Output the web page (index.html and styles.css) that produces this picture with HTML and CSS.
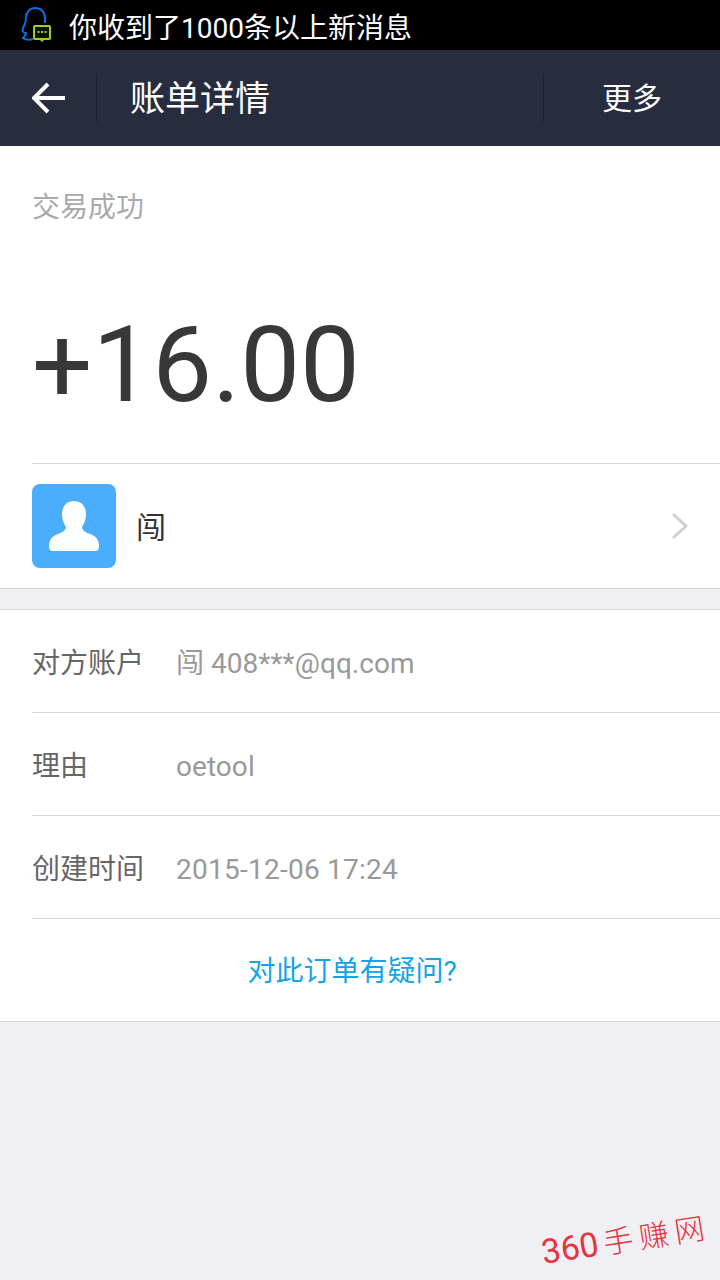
FILE: index.html
```html
<!DOCTYPE html>
<html>
<head>
  <title>账单详情</title>
  <link rel="stylesheet" href="styles.css">
</head>
<body>
  <div class="status-bar">
    <svg class="qq-icon" width="34" height="36" viewBox="0 0 34 36">
      <path d="M13 32 C10 33 5 33 3 31 C5 29 6 28 6 26 C3 26 2 24 3 21 C5 17 6 16 6 11 C6 5 10 1 15 1 C21 1 25 5 25 11 L25 16" fill="none" stroke="#0a6fe0" stroke-width="2"/>
      <rect x="14" y="19" width="16" height="13" rx="1" fill="#0b1200" stroke="#a4cf10" stroke-width="2"/>
      <path d="M19 32 L22 35 L25 32 Z" fill="#a4cf10"/>
      <rect x="17.500" y="24" width="2" height="2" fill="#a4cf10"/>
      <rect x="21" y="24" width="2" height="2" fill="#a4cf10"/>
      <rect x="24.500" y="24" width="2" height="2" fill="#a4cf10"/>
    </svg>
    <span class="status-text">你收到了1000条以上新消息</span>
  </div>

  <div class="title-bar">
    <div class="back-btn">
      <svg width="34" height="32" viewBox="0 0 34 32">
        <path d="M33 16 L3 16 M16 2 L2 16 L16 30" fill="none" stroke="#fff" stroke-width="4"/>
      </svg>
    </div>
    <div class="title">账单详情</div>
    <div class="more">更多</div>
  </div>

  <div class="summary">
    <div class="state">交易成功</div>
    <div class="amount">+16.00</div>
    <div class="payer">
      <div class="avatar">
        <svg width="52" height="50" viewBox="0 0 52 50">
          <path d="M26 0 C34 0 38 6 38 13 C38 19 36 23 34 26 C34 29 37 31 42 33 C48 35 51 39 51 45 C51 48 50 50 47 50 L5 50 C2 50 1 48 1 45 C1 39 4 35 10 33 C15 31 18 29 18 26 C16 23 14 19 14 13 C14 6 18 0 26 0 Z" fill="#fdfeff"/>
        </svg>
      </div>
      <div class="payer-name">闯</div>
      <svg class="chevron" width="18" height="28" viewBox="0 0 18 28">
        <path d="M2 2 L15 14 L2 26" fill="none" stroke="#d0d0d4" stroke-width="3"/>
      </svg>
    </div>
  </div>

  <div class="details">
    <div class="row">
      <div class="label">对方账户</div>
      <div class="value">闯 408***@qq.com</div>
    </div>
    <div class="row">
      <div class="label">理由</div>
      <div class="value">oetool</div>
    </div>
    <div class="row">
      <div class="label">创建时间</div>
      <div class="value time">2015-12-06 17:24</div>
    </div>
    <div class="question">对此订单有疑问?</div>
  </div>

  <div class="watermark"><span class="wm-num">360</span><span class="wm-cn">手赚网</span></div>
</body>
</html>
```

FILE: styles.css
```css
* {
  box-sizing: border-box;
}

html, body {
  margin: 0;
  padding: 0;
}

body {
  width: 720px;
  height: 1280px;
  overflow: hidden;
  position: relative;
  background-color: #efeff4;
  font-family: Roboto, "Noto Sans CJK SC", sans-serif;
}

.status-bar {
  height: 50px;
  background-color: #000;
  display: flex;
  align-items: center;
  padding-left: 20px;
}

.qq-icon {
  margin-right: 15px;
}

.status-text {
  color: #fff;
  font-size: 28px;
  padding-top: 2px;
}

.title-bar {
  height: 96px;
  background-color: #282c3f;
  display: flex;
  align-items: center;
  color: #fff;
}

.back-btn {
  width: 97px;
  height: 48px;
  padding-left: 32px;
  display: flex;
  align-items: center;
  border-right: 1px solid #1c1f2e;
}

.title {
  flex: 1;
  padding-left: 33px;
  padding-bottom: 6px;
  font-size: 35px;
}

.more {
  width: 177px;
  height: 48px;
  line-height: 50px;
  padding-left: 58px;
  font-size: 30px;
  border-left: 1px solid #1c1f2e;
}

.summary {
  background-color: #fff;
  padding-left: 32px;
  border-bottom: 1px solid #d8d8dc;
}

.state {
  padding-top: 43px;
  height: 118px;
  line-height: 38px;
  font-size: 28px;
  color: #aaa;
}

.amount {
  height: 200px;
  line-height: 201px;
  font-size: 106.500px;
  color: #38383a;
  border-bottom: 1px solid #d8d8dc;
}

.payer {
  height: 124px;
  display: flex;
  align-items: center;
  padding-bottom: 1px;
}

.avatar {
  width: 84px;
  height: 84px;
  border-radius: 8px;
  background-color: #4badfd;
  display: flex;
  align-items: center;
  justify-content: center;
}

.payer-name {
  flex: 1;
  margin-left: 20px;
  padding-bottom: 2px;
  font-size: 30px;
  color: #333;
}

.chevron {
  margin-right: 31px;
}

.details {
  margin-top: 20px;
  background-color: #fff;
  border-top: 1px solid #d8d8dc;
  border-bottom: 1px solid #d8d8dc;
  padding-left: 32px;
}

.row {
  height: 103px;
  padding-top: 5px;
  display: flex;
  align-items: center;
  border-bottom: 1px solid #d8d8dc;
  font-size: 28px;
  line-height: 40px;
}

.label {
  width: 144px;
  color: #666;
}

.value {
  color: #999;
  letter-spacing: .05px;
}

.time {
  letter-spacing: .25px;
}

.question {
  height: 102px;
  line-height: 106px;
  padding-right: 48px;
  text-align: center;
  font-size: 28px;
  color: #10a5e8;
}

.watermark {
  position: absolute;
  left: 545px;
  top: 1229px;
  display: flex;
  align-items: baseline;
  gap: 5px;
  color: #e8323c;
  transform: rotate(-9deg);
  transform-origin: left bottom;
}

.wm-num {
  font-size: 34px;
}

.wm-cn {
  font-size: 30px;
  font-weight: 300;
  letter-spacing: 6px;
}
```
